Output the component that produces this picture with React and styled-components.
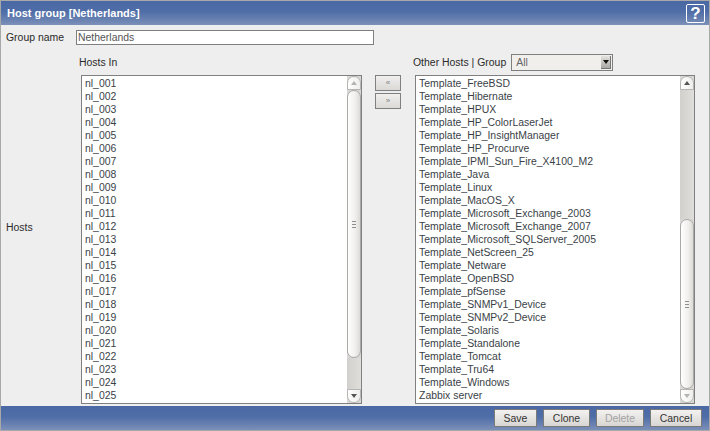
import React from 'react';
import styled, { createGlobalStyle } from 'styled-components';

const hostsIn = Array.from({ length: 25 }, (_, i) => 'nl_' + String(i + 1).padStart(3, '0'));

const otherHosts = [
    'Template_FreeBSD',
    'Template_Hibernate',
    'Template_HPUX',
    'Template_HP_ColorLaserJet',
    'Template_HP_InsightManager',
    'Template_HP_Procurve',
    'Template_IPMI_Sun_Fire_X4100_M2',
    'Template_Java',
    'Template_Linux',
    'Template_MacOS_X',
    'Template_Microsoft_Exchange_2003',
    'Template_Microsoft_Exchange_2007',
    'Template_Microsoft_SQLServer_2005',
    'Template_NetScreen_25',
    'Template_Netware',
    'Template_OpenBSD',
    'Template_pfSense',
    'Template_SNMPv1_Device',
    'Template_SNMPv2_Device',
    'Template_Solaris',
    'Template_Standalone',
    'Template_Tomcat',
    'Template_Tru64',
    'Template_Windows',
    'Zabbix server',
];

const GlobalStyle = createGlobalStyle`
    html, body {
        margin: 0;
        padding: 0;
        background: #eeeeee;
    }
    * {
        box-sizing: border-box;
    }
`;

const Frame = styled.div`
    width: 710px;
    height: 431px;
    display: flex;
    flex-direction: column;
    background: #eeeeee;
    border: 1px solid #a8a8a8;
    font-family: "Liberation Sans", Arial, sans-serif;
    font-size: 10.45px;
    color: #2a2a2a;
    overflow: hidden;
`;

const TitleBar = styled.div`
    height: 24px;
    flex: none;
    display: flex;
    align-items: center;
    justify-content: space-between;
    padding: 0 4px 0 6px;
    background: linear-gradient(to bottom, #4a69a4 0%, #4f6da7 45%, #7c90b9 100%);
    color: #ffffff;
    font-size: 11px;
    font-weight: bold;
`;

const HelpIcon = styled.div`
    width: 19px;
    height: 19px;
    display: flex;
    align-items: center;
    justify-content: center;
    border: 1px solid #ffffff;
    border-radius: 2px;
    font-size: 17px;
    font-weight: bold;
    line-height: 1;
    color: #ffffff;
`;

const Form = styled.div`
    flex: 1;
    display: flex;
    flex-direction: column;
    min-height: 0;
`;

const NameRow = styled.div`
    display: flex;
    align-items: center;
    padding: 4px 0 0 5px;
    height: 20px;
    box-sizing: content-box;
`;

const NameLabel = styled.label`
    width: 70px;
    flex: none;
`;

const NameInput = styled.input`
    width: 298px;
    height: 15px;
    padding: 0 0 1px 1px;
    border: 1px solid #7f7f7f;
    background: #ffffff;
    font-family: inherit;
    font-size: 10.45px;
    color: #555555;
    outline: none;
`;

const HostsRow = styled.div`
    flex: 1;
    display: flex;
    align-items: stretch;
    padding-top: 5px;
`;

const HostsLabel = styled.div`
    width: 80px;
    flex: none;
    align-self: center;
    padding-left: 5px;
`;

const ListColumn = styled.div`
    width: ${({ $width }) => $width}px;
    flex: none;
    display: flex;
    flex-direction: column;
`;

const ColumnHead = styled.div`
    height: 24px;
    flex: none;
    display: flex;
    align-items: center;
    gap: 5px;
    padding-bottom: 2px;
    margin-left: -2px;
`;

const GroupSelect = styled.div`
    width: 102px;
    height: 17px;
    display: flex;
    align-items: center;
    justify-content: space-between;
    padding: 0 1px 0 4px;
    border: 1px solid #7f7f7f;
    background: #f1efec;
    color: #666666;
`;

const SelectArrow = styled.div`
    width: 10px;
    height: 13px;
    display: flex;
    align-items: center;
    justify-content: center;
    background: linear-gradient(to bottom, #e4e2df, #a9a7a4);
    border-right: 1px solid #777777;
    border-bottom: 1px solid #777777;
    &::after {
        content: '';
        border-left: 3px solid transparent;
        border-right: 3px solid transparent;
        border-top: 4px solid #111111;
    }
`;

const ListBox = styled.div`
    height: 329px;
    display: flex;
    border: 1px solid #808080;
    background: #ffffff;
    overflow: hidden;
`;

const Items = styled.div`
    flex: 1;
    min-width: 0;
    padding: 1px 0 0 3px;
    color: #3a3f47;
`;

const Item = styled.div`
    height: 13px;
    line-height: 13px;
    white-space: nowrap;
`;

const Scrollbar = styled.div`
    width: 14px;
    flex: none;
    display: flex;
    flex-direction: column;
    background: #d9d7d4;
`;

const ScrollButton = styled.div`
    height: 14px;
    flex: none;
    display: flex;
    align-items: center;
    justify-content: center;
    background: linear-gradient(to right, #ffffff, #eeeeec);
    border: 1px solid #b5b5b3;
    border-radius: ${({ $down }) => ($down ? '0 0 7px 7px' : '7px 7px 0 0')};
    &::after {
        content: '';
        border-left: 3px solid transparent;
        border-right: 3px solid transparent;
        ${({ $down, $faded }) => {
            const colour = $faded ? '#b4b4b4' : '#555555';
            return $down ? `border-top: 4px solid ${colour};` : `border-bottom: 4px solid ${colour};`;
        }}
    }
`;

const Trough = styled.div`
    height: ${({ $height }) => $height}px;
    flex: none;
    background: linear-gradient(to right, #d2d0cd, #e0dedb);
`;

const Thumb = styled.div`
    flex: 1;
    display: flex;
    align-items: center;
    justify-content: center;
    background: linear-gradient(to right, #ffffff, #f0efed 60%, #dddbd8);
    border: 1px solid #a9a9a7;
    border-radius: 7px;
    &::after {
        content: '';
        width: 4px;
        height: 7px;
        background: repeating-linear-gradient(to bottom, #8f8f8f 0, #8f8f8f 1px, transparent 1px, transparent 3px);
    }
`;

const MoveColumn = styled.div`
    width: 53px;
    flex: none;
    display: flex;
    flex-direction: column;
    gap: 2px;
    padding: 24px 0 0 13px;
`;

const MoveButton = styled.button`
    width: 26px;
    height: 16px;
    padding: 0;
    border: 1px solid #808080;
    border-radius: 0;
    background: linear-gradient(to bottom, #f0efed, #dbd9d6);
    font-family: inherit;
    font-size: 8px;
    line-height: 12px;
    color: #808080;
`;

const Footer = styled.div`
    height: 24px;
    flex: none;
    margin-top: 2px;
    display: flex;
    align-items: center;
    justify-content: flex-end;
    gap: 6px;
    padding: 0 7px 0 0;
    background: linear-gradient(to bottom, #4a69a4 0%, #4f6da7 45%, #7c90b9 100%);
`;

const ActionButton = styled.button`
    width: ${({ $width }) => $width}px;
    height: 18px;
    padding: 0;
    border: 1px solid #7a7a7a;
    border-radius: 0;
    background: linear-gradient(to bottom, #f3f2f0, #d8d6d3);
    font-family: inherit;
    font-size: 10.45px;
    color: ${({ disabled }) => (disabled ? '#a3a3a3' : '#333333')};
`;

const HostList = ({ items, topTrough, bottomTrough, fadedUp, fadedDown }) => (
    <ListBox>
        <Items>
            {items.map((item) => (
                <Item key={item}>{item}</Item>
            ))}
        </Items>
        <Scrollbar>
            <ScrollButton $faded={fadedUp} />
            <Trough $height={topTrough} />
            <Thumb />
            <Trough $height={bottomTrough} />
            <ScrollButton $down $faded={fadedDown} />
        </Scrollbar>
    </ListBox>
);

const App = () => (
    <Frame>
        <GlobalStyle />
        <TitleBar>
            <span>Host group [Netherlands]</span>
            <HelpIcon>?</HelpIcon>
        </TitleBar>
        <Form>
            <NameRow>
                <NameLabel>Group name</NameLabel>
                <NameInput defaultValue="Netherlands" />
            </NameRow>
            <HostsRow>
                <HostsLabel>Hosts</HostsLabel>
                <ListColumn $width={281}>
                    <ColumnHead>Hosts In</ColumnHead>
                    <HostList items={hostsIn} topTrough={0} bottomTrough={31} fadedUp />
                </ListColumn>
                <MoveColumn>
                    <MoveButton>«</MoveButton>
                    <MoveButton>»</MoveButton>
                </MoveColumn>
                <ListColumn $width={280}>
                    <ColumnHead>
                        Other Hosts | Group
                        <GroupSelect>
                            All
                            <SelectArrow />
                        </GroupSelect>
                    </ColumnHead>
                    <HostList items={otherHosts} topTrough={129} bottomTrough={0} fadedDown />
                </ListColumn>
            </HostsRow>
        </Form>
        <Footer>
            <ActionButton $width={43}>Save</ActionButton>
            <ActionButton $width={47}>Clone</ActionButton>
            <ActionButton $width={48} disabled>Delete</ActionButton>
            <ActionButton $width={52}>Cancel</ActionButton>
        </Footer>
    </Frame>
);

export default App;
